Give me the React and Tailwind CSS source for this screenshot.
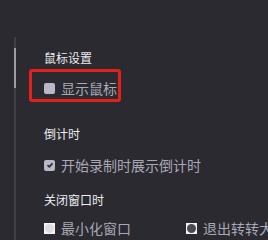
import React from "react";

const Checkbox = ({ checked }) => (
  <span className="w-[11px] h-[11px] rounded-[2px] bg-[#b9b8c6] flex items-center justify-center shrink-0">
    {checked && (
      <svg width="8" height="8" viewBox="0 0 8 8">
        <path d="M1.5 4.2 L3.3 5.8 L6.5 2.4" stroke="#2b2a31" strokeWidth="1.6" fill="none" />
      </svg>
    )}
  </span>
);

const Radio = ({ checked }) => (
  <span className="w-[11px] h-[11px] bg-[#f4f4f6] flex items-center justify-center shrink-0">
    <span className={`w-[9px] h-[9px] rounded-full ${checked ? "bg-[#4a4a52]" : "bg-[#dcdce2]"}`} />
  </span>
);

const Heading = ({ children, className = "" }) => (
  <div className={`h-5 flex items-center text-[12px] text-[#ececf0] ${className}`}>{children}</div>
);

const Row = ({ children, className = "" }) => (
  <div className={`h-5 flex items-center gap-[6px] text-[14px] text-[#a9a8b6] whitespace-nowrap ${className}`}>
    {children}
  </div>
);

export default function App() {
  return (
    <div
      className="w-[268px] h-[240px] bg-[#2a2a30] flex overflow-hidden"
      style={{ fontFamily: '"Noto Sans CJK SC", "Liberation Sans", sans-serif' }}
    >
      <div className="w-[44px] shrink-0 flex flex-col pl-[14px] pt-[37px]">
        <div className="w-[2px] flex-1 flex flex-col bg-[#3f3f47]">
          <div className="h-[11px]" />
          <div className="h-[40px] bg-[#9c9ba8]" />
        </div>
      </div>
      <div className="flex-1 flex flex-col pt-[48px]">
        <Heading>鼠标设置</Heading>
        <div className="relative mt-[10px]">
          <Row>
            <Checkbox />
            <span>显示鼠标</span>
          </Row>
          <div className="absolute left-[-15px] top-[-9px] w-[92px] h-[33px] border-[3px] border-[#e3201e] rounded-[3px]" />
        </div>
        <Heading className="mt-[26px]">倒计时</Heading>
        <Row className="mt-[11px]">
          <Checkbox checked />
          <span>开始录制时展示倒计时</span>
        </Row>
        <Heading className="mt-[15px]">关闭窗口时</Heading>
        <div className="flex mt-[8px]">
          <Row className="w-[142px]">
            <Radio />
            <span>最小化窗口</span>
          </Row>
          <Row>
            <Radio checked />
            <span>退出转转大师</span>
          </Row>
        </div>
      </div>
    </div>
  );
}
